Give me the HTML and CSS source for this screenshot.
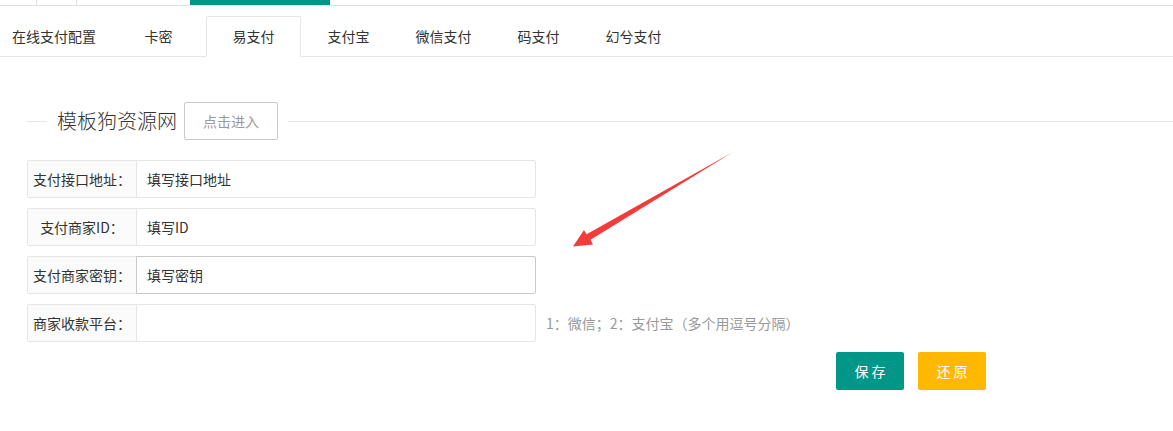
FILE: index.html
```html
<!DOCTYPE html>
<html lang="zh-CN">
<head>
<meta charset="utf-8">
<title>易支付配置</title>
<link rel="stylesheet" href="styles.css">
</head>
<body>
<div class="page">
  <div class="topstrip">
    <div class="ts-cell ts-a"></div>
    <div class="ts-cell ts-b"></div>
    <div class="ts-cell ts-c"></div>
    <div class="ts-active"></div>
  </div>

  <ul class="tabs">
    <li class="tab tab-first">在线支付配置</li>
    <li class="tab">卡密</li>
    <li class="tab tab-active">易支付</li>
    <li class="tab">支付宝</li>
    <li class="tab">微信支付</li>
    <li class="tab">码支付</li>
    <li class="tab">幻兮支付</li>
  </ul>

  <div class="fieldset">
    <span class="fs-line fs-line-left"></span>
    <div class="legend">
      <span class="legend-text">模板狗资源网</span>
      <button class="btn-primary" type="button">点击进入</button>
    </div>
    <span class="fs-line fs-line-right"></span>
  </div>

  <form class="form">
    <div class="row">
      <label class="label">支付接口地址：</label>
      <input class="input" type="text" value="填写接口地址">
    </div>
    <div class="row">
      <label class="label">支付商家ID：</label>
      <input class="input" type="text" value="填写ID">
    </div>
    <div class="row">
      <label class="label">支付商家密钥：</label>
      <input class="input input-hover" type="text" value="填写密钥">
    </div>
    <div class="row">
      <label class="label">商家收款平台：</label>
      <input class="input" type="text" value="">
      <span class="aux">1：微信；2：支付宝（多个用逗号分隔）</span>
    </div>
    <div class="actions">
      <button class="btn btn-green" type="button">保 存</button>
      <button class="btn btn-yellow" type="button">还 原</button>
    </div>
  </form>

  <svg class="arrow" width="1173" height="431" viewBox="0 0 1173 431" aria-hidden="true">
    <polygon points="733,152 590.5,239.8 593,244.5 573,246.5 584,230 586.6,234.2" fill="#f53a3a"/>
  </svg>
</div>
</body>
</html>
```

FILE: styles.css
```css
* { box-sizing: border-box; }

html, body {
  margin: 0;
  padding: 0;
  background: #fff;
}

body {
  font-family: "Noto Sans CJK SC", "Microsoft YaHei", "Liberation Sans", sans-serif;
  font-size: 14px;
  color: #333;
  width: 1173px;
  height: 431px;
  overflow: hidden;
}

.page {
  position: relative;
  width: 1173px;
  height: 431px;
}

/* top strip remnants */
.topstrip {
  display: flex;
  height: 6px;
  border-bottom: 1px solid #e2e2e2;
}
.ts-cell { height: 5px; border-right: 1px solid #e2e2e2; }
.ts-a { width: 37px; }
.ts-b { width: 40px; }
.ts-c { width: 113px; border-right: none; }
.ts-active { width: 140px; height: 5px; background: #009688; }

/* tabs */
.tabs {
  list-style: none;
  margin: 10px 0 0 0;
  padding: 0;
  display: flex;
  height: 41px;
  border-bottom: 1px solid #e6e6e6;
}
.tab {
  min-width: 95px;
  padding: 0 15px;
  height: 40px;
  line-height: 40px;
  text-align: center;
  white-space: nowrap;
  color: #333;
}
.tab-first {
  min-width: 0;
  width: 111px;
  padding: 0 15px 0 12px;
  text-align: left;
}
.tab-active {
  height: 41px;
  line-height: 39px;
  border: 1px solid #e6e6e6;
  border-bottom: 1px solid #fff;
  background: #fff;
  border-radius: 2px 2px 0 0;
}

/* fieldset title */
.fieldset {
  display: flex;
  align-items: center;
  margin: 45px 0 0 27px;
  height: 38px;
}
.fs-line {
  height: 1px;
  background: #e6e6e6;
}
.fs-line-left { width: 20px; }
.fs-line-right { flex: 1; }
.legend {
  display: flex;
  align-items: center;
  padding: 0 10px;
}
.legend-text {
  font-size: 20px;
  font-weight: 300;
  color: #333;
  line-height: 24px;
}
.btn-primary {
  margin-left: 7px;
  height: 38px;
  width: 94px;
  padding: 0;
  border: 1px solid #c9c9c9;
  border-radius: 2px;
  background: #fff;
  color: #999;
  font-family: inherit;
  font-size: 14px;
  line-height: 36px;
}

/* form */
.form {
  margin: 20px 0 0 27px;
}
.row {
  display: flex;
  align-items: center;
  height: 38px;
  margin-bottom: 10px;
}
.label {
  width: 110px;
  height: 38px;
  line-height: 36px;
  padding: 0;
  text-align: center;
  white-space: nowrap;
  background: #fbfbfb;
  border: 1px solid #e6e6e6;
  border-radius: 2px 0 0 2px;
  color: #333;
}
.input {
  width: 400px;
  height: 38px;
  margin-left: -1px;
  padding: 0 10px;
  border: 1px solid #e6e6e6;
  border-radius: 0 2px 2px 0;
  background: #fff;
  font-family: inherit;
  font-size: 14px;
  color: #333;
  outline: none;
}
.input-hover { border-color: #c9c9c9; }
.aux {
  margin-left: 10px;
  color: #999;
  white-space: nowrap;
}

.actions {
  display: flex;
  gap: 14px;
  padding-left: 809px;
  margin-top: 10px;
}
.btn {
  width: 68px;
  height: 38px;
  padding: 0;
  border: none;
  border-radius: 2px;
  color: #fff;
  font-family: inherit;
  font-size: 14px;
  line-height: 38px;
  text-align: center;
}
.btn-green { background: #009688; }
.btn-yellow { background: #ffb800; }

/* annotation arrow overlay */
.arrow {
  position: absolute;
  left: 0;
  top: 0;
  pointer-events: none;
}
```
